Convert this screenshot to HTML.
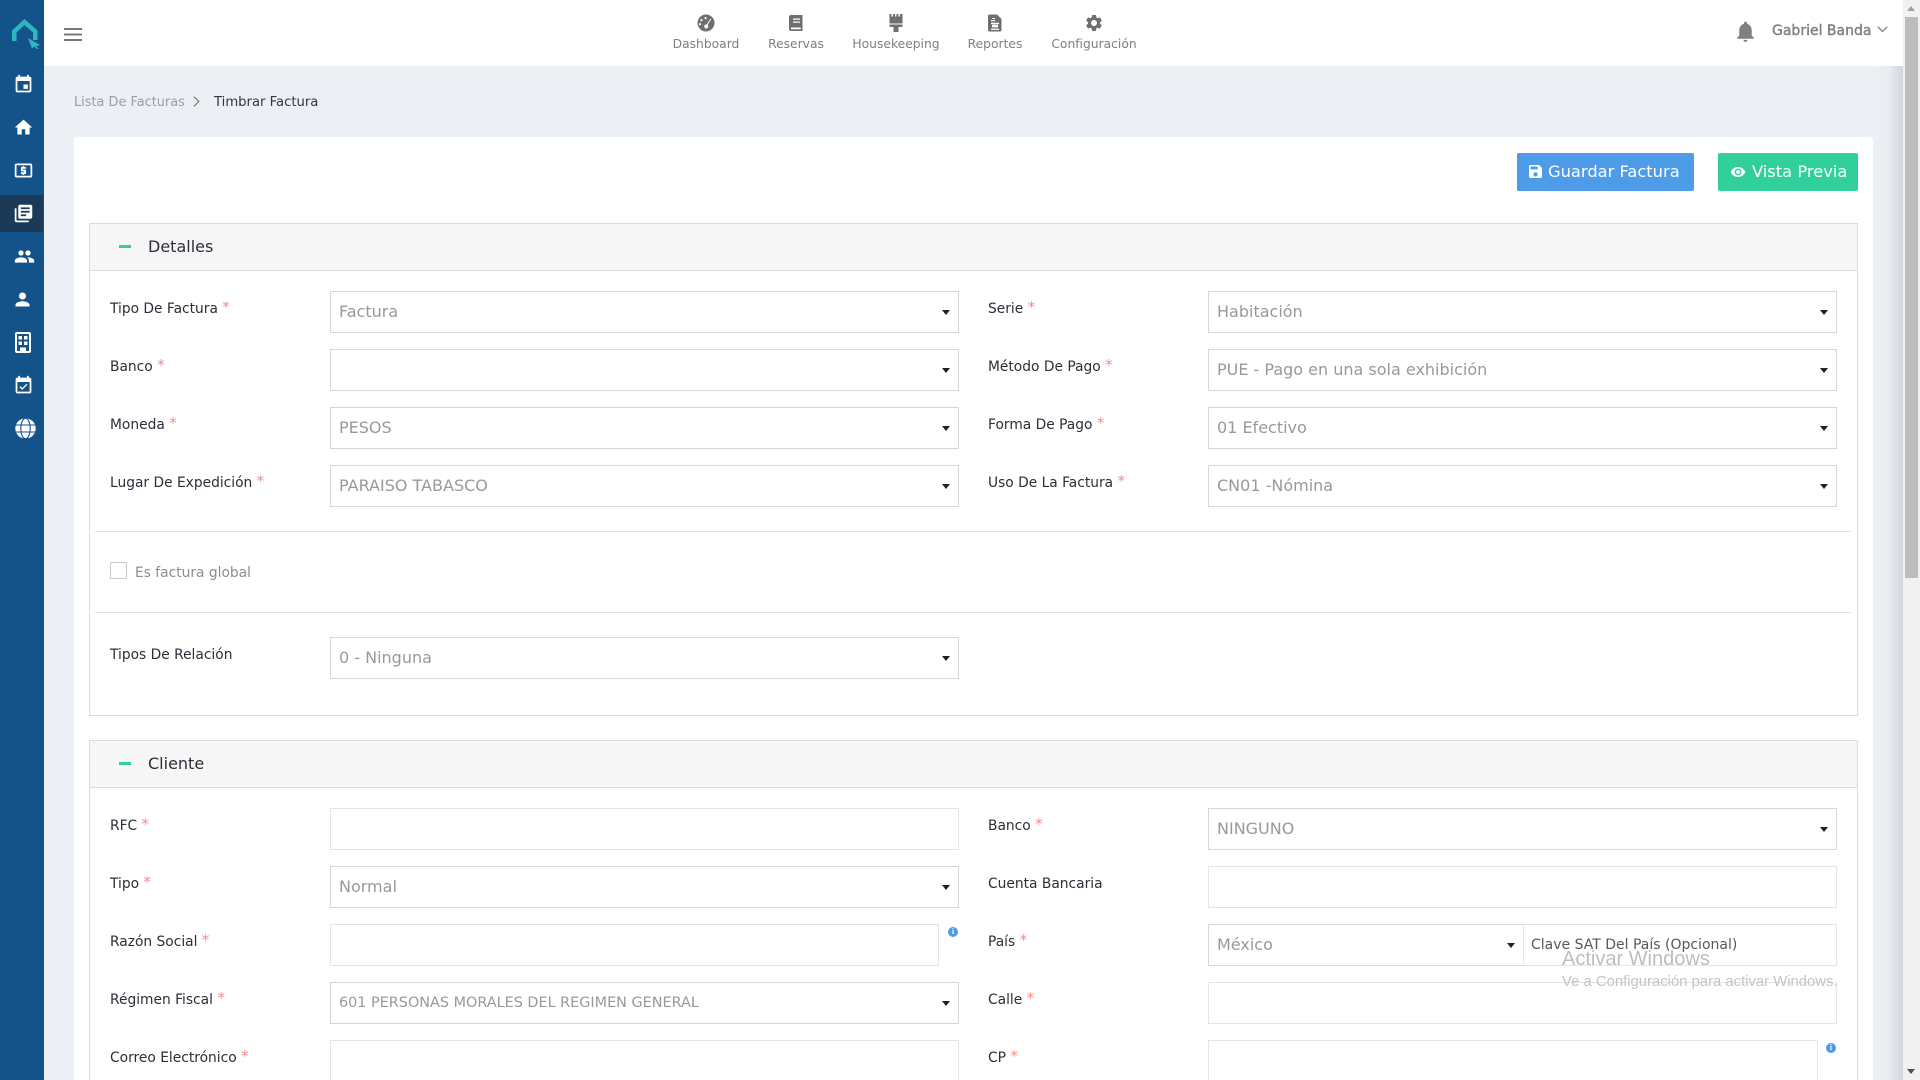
<!DOCTYPE html>
<html lang="es"><head><meta charset="utf-8"><title>Timbrar Factura</title>
<style>
*{box-sizing:border-box}
html,body{margin:0;padding:0;width:1920px;height:1080px;overflow:hidden;background:#ecf0f5;font-family:"DejaVu Sans","Liberation Sans",sans-serif}
#wrap{position:relative;width:1920px;height:1080px;overflow:hidden;background:#ecf0f5}
.a{position:absolute}
#side{left:0;top:0;width:44px;height:1080px;background:#14538a}
#active{left:0;top:195px;width:43px;height:37px;background:#1a3a57}
#side svg{position:absolute;fill:#fff}
#top{left:44px;top:0;width:1859px;height:66px;background:#fff}
.nav{position:absolute;top:35px;width:120px;text-align:center;font-size:12.3px;line-height:18px;color:#7d7f85;white-space:nowrap}
.ni{position:absolute;fill:#6f6f6f;width:20px;height:20px;top:13px}
#shadow{left:1873px;top:66px;width:30px;height:1014px;background:linear-gradient(90deg,#ecf0f5 0,#e9ecf1 50%,#d2d6dc 100%)}
#track{left:1903px;top:0;width:17px;height:1080px;background:#f1f1f1}
#thumb{left:1905px;top:17px;width:13px;height:561px;background:#bdbdbd}
#card{left:74px;top:137px;width:1799px;height:943px;background:#fff;border-radius:3px 3px 0 0}
.btn{position:absolute;top:153px;height:38px;border-radius:2px;color:#fff;font-size:16.3px;line-height:38px;white-space:nowrap}
.panel{position:absolute;left:89px;width:1769px;border:1px solid #dcdcdc;background:#fff}
.ph{position:absolute;left:89px;width:1769px;height:48px;background:#f6f6f6;border:1px solid #dcdcdc;font-size:16px;line-height:46px;color:#2b2f38;padding-left:58px}
.minus{position:absolute;left:119px;width:12px;height:3px;background:#30cf9b}
.l{position:absolute;font-size:13.8px;line-height:20px;color:#2b2f38;white-space:nowrap}
.l i{font-style:normal;color:#f28b8b;margin-left:0;font-size:15px;line-height:0;position:relative;top:-1px}
.s,.t{position:absolute;height:42px;background:#fff;border:1px solid #d3d6dc;font-size:16px;line-height:40px;color:#999;padding-left:8px;white-space:nowrap}
.t{border-color:#e3e5e9}
.s:after{content:"";position:absolute;right:8px;top:18px;border:4px solid transparent;border-top:5px solid #222;border-bottom:0}
.w1{left:330px;width:629px}
.w2{left:1208px;width:629px}
.hr{position:absolute;left:95px;width:1757px;height:1px;background:#e3e3e3}
.info{position:absolute;width:10px;height:10px;border-radius:50%;background:#4e9ce8;color:#fff;font:bold 8px/10px "Liberation Serif",serif;text-align:center}
</style></head><body>
<div id="wrap">

<div class="a" id="side">
<svg style="left:12px;top:18px;width:30px;height:31px" viewBox="0 0 30 31"><path d="M12.5 1L0 12.5V23h4.500V14.500L12.500 7l8.500 7.500V22h4.500V12.500z" fill="#2fb5c0"/><path d="M16 20l12 7-4 1.500L27 31l-2 0-3-2.500-2 2z" fill="#2fb5c0"/></svg>
<div class="a" id="active"></div>
<svg style="left:12.500px;top:74px;width:21px;height:21px" viewBox="0 0 24 24"><path d="M17 12h-5v5h5v-5zM16 1v2H8V1H6v2H5c-1.110 0-1.990.9-1.990 2L3 19c0 1.100.89 2 2 2h14c1.100 0 2-.9 2-2V5c0-1.100-.9-2-2-2h-1V1h-2zm3 18H5V8h14v11z"/></svg>
<svg style="left:13px;top:117px;width:21px;height:21px" viewBox="0 0 24 24"><path d="M10 20v-6h4v6h5v-8h3L12 3 2 12h3v8z"/></svg>
<svg style="left:13px;top:160px;width:21px;height:21px" viewBox="0 0 24 24"><path d="M11 17h2v-1h1c.55 0 1-.45 1-1v-3c0-.55-.45-1-1-1h-3v-1h4V8h-2V7h-2v1h-1c-.55 0-1 .45-1 1v3c0 .55.45 1 1 1h3v1H9v2h2v1zm9-13H4c-1.110 0-1.990.89-1.990 2L2 18c0 1.110.89 2 2 2h16c1.110 0 2-.89 2-2V6c0-1.110-.89-2-2-2zm0 14H4V6h16v12z"/></svg>
<svg style="left:13px;top:203px;width:21px;height:21px" viewBox="0 0 24 24"><path d="M4 6H2v14c0 1.100.9 2 2 2h14v-2H4V6zm16-4H8c-1.100 0-2 .9-2 2v12c0 1.100.9 2 2 2h12c1.100 0 2-.9 2-2V4c0-1.100-.9-2-2-2zm-1 9H9V9h10v2zm-4 4H9v-2h6v2zm4-8H9V5h10v2z"/></svg>
<svg style="left:14px;top:246px;width:21px;height:21px" viewBox="0 0 24 24"><path d="M16 11c1.660 0 2.990-1.340 2.990-3S17.660 5 16 5c-1.660 0-3 1.340-3 3s1.340 3 3 3zm-8 0c1.660 0 2.990-1.340 2.990-3S9.660 5 8 5C6.340 5 5 6.340 5 8s1.340 3 3 3zm0 2c-2.330 0-7 1.170-7 3.500V19h14v-2.500c0-2.330-4.670-3.500-7-3.500zm8 0c-.29 0-.62.02-.97.05 1.160.84 1.970 1.970 1.970 3.450V19h6v-2.500c0-2.330-4.670-3.500-7-3.500z"/></svg>
<svg style="left:11.500px;top:289px;width:21px;height:21px" viewBox="0 0 24 24"><path d="M12 12c2.210 0 4-1.790 4-4s-1.790-4-4-4-4 1.790-4 4 1.790 4 4 4zm0 2c-2.670 0-8 1.340-8 4v2h16v-2c0-2.660-5.330-4-8-4z"/></svg>
<svg style="left:15px;top:332px;width:16px;height:21px" viewBox="0 0 16 21"><path fill-rule="evenodd" d="M2 0h12a2 2 0 012 2v17a2 2 0 01-2 2H2a2 2 0 01-2-2V2a2 2 0 012-2zm0 2v17h3v-3.500h6V19h3V2zm1.500 2H7v3.500H3.500zm5.500 0h3.500v3.500H9zM3.500 9.500H7V13H3.500zm5.500 0h3.500V13H9z"/></svg>
<svg style="left:12.500px;top:375px;width:21px;height:21px" viewBox="0 0 24 24"><path d="M16.530 11.060L15.470 10l-4.880 4.880-2.120-2.120-1.060 1.060L10.590 17l5.940-5.940zM19 3h-1V1h-2v2H8V1H6v2H5c-1.110 0-1.990.9-1.990 2L3 19c0 1.100.89 2 2 2h14c1.100 0 2-.9 2-2V5c0-1.100-.9-2-2-2zm0 16H5V8h14v11z"/></svg>
<svg style="left:15px;top:418px;width:21px;height:21px" viewBox="0 0 21 21"><circle cx="10.500" cy="10.500" r="10.200" fill="#fff"/><g fill="none" stroke="#14538a" stroke-width="1.100"><path d="M0 7h21M0 14h21"/><ellipse cx="10.500" cy="10.500" rx="4.700" ry="10.200"/></g></svg>
</div>

<div class="a" id="top"></div>
<svg class="a" style="left:64px;top:28px;width:18px;height:13px" viewBox="0 0 18 13"><path d="M0 0h18v2H0zM0 5.500h18v2H0zM0 11h18v2H0z" fill="#777"/></svg>

<svg class="ni" style="left:696px" viewBox="0 0 20 20"><path fill-rule="evenodd" d="M10 1.500a8.500 8.500 0 110 17 8.500 8.500 0 010-17zM9.600 4a1.100 1.100 0 100 2.200A1.100 1.100 0 009.600 4zM5.500 6a1.100 1.100 0 100 2.200 1.100 1.100 0 000-2.200zM4 10a1.100 1.100 0 100 2.200A1.100 1.100 0 004 10zm10.500-4.500l-3.800 6a2 2 0 10.900.500l3.700-6z"/></svg>
<svg class="ni" style="left:786px" viewBox="0 0 20 20"><path fill-rule="evenodd" d="M5 2h11.500v16H5a2 2 0 01-2-2V4a2 2 0 012-2zm2 3.500v1.200h7V5.500zm0 3v1.200h7V8.500zM5 14.500v1.800h9.800v-1.800z"/></svg>
<svg class="ni" style="left:886px" viewBox="0 0 20 20"><path d="M3.500 1h2v2.500H7V1h2v2.500h1.500V1h2v2.500H14V1h2.500v9.500h-13zM3.500 11.500h13V13a1 1 0 01-1 1h-3v5h-5v-5h-3a1 1 0 01-1-1z"/></svg>
<svg class="ni" style="left:985px" viewBox="0 0 20 20"><path fill-rule="evenodd" d="M4.500 1.500h7.500l4.500 4.500v11a1.500 1.500 0 01-1.500 1.500H4.500A1.500 1.500 0 013 17V3a1.500 1.500 0 011.500-1.500zM6 7v1.300h4V7zm0 2.800v1.300h8V9.800zm1 1.800v2.800h6v-2.800zm-1 4v1.300h8v-1.300zM7 5v1h3V5z"/></svg>
<svg class="ni" style="left:1084px" viewBox="0 0 24 24"><path d="M19.140 12.940c.04-.3.06-.61.06-.94 0-.32-.02-.64-.07-.94l2.030-1.580c.18-.14.23-.41.12-.61l-1.920-3.320c-.12-.22-.37-.29-.59-.22l-2.390.96c-.5-.38-1.030-.7-1.620-.94l-.36-2.540c-.04-.24-.24-.41-.48-.41h-3.840c-.24 0-.43.17-.47.41l-.36 2.540c-.59.24-1.130.57-1.620.94l-2.390-.96c-.22-.08-.47 0-.59.22L2.740 8.870c-.12.21-.08.47.12.61l2.030 1.580c-.05.3-.09.63-.09.94s.02.64.07.94l-2.030 1.580c-.18.14-.23.41-.12.61l1.920 3.320c.12.22.37.29.59.22l2.390-.96c.5.38 1.030.7 1.620.94l.36 2.540c.05.24.24.41.48.41h3.840c.24 0 .44-.17.47-.41l.36-2.540c.59-.24 1.130-.56 1.620-.94l2.390.96c.22.08.47 0 .59-.22l1.920-3.320c.12-.22.07-.47-.12-.61l-2.010-1.580zM12 15.600c-1.980 0-3.600-1.620-3.600-3.600s1.620-3.600 3.600-3.600 3.600 1.620 3.600 3.600-1.620 3.600-3.600 3.600z"/></svg>
<div class="nav" style="left:646px">Dashboard</div>
<div class="nav" style="left:736px">Reservas</div>
<div class="nav" style="left:836px">Housekeeping</div>
<div class="nav" style="left:935px">Reportes</div>
<div class="nav" style="left:1034px">Configuración</div>

<svg class="a" style="left:1733px;top:19px;width:25px;height:25px;fill:#808080" viewBox="0 0 24 24"><path d="M12 22c1.100 0 2-.9 2-2h-4c0 1.100.89 2 2 2zm6-6v-5c0-3.070-1.640-5.640-4.500-6.320V4c0-.83-.67-1.500-1.500-1.500s-1.500.67-1.500 1.500v.68C7.630 5.360 6 7.920 6 11v5l-2 2v1h16v-1l-2-2z"/></svg>
<div class="a" style="left:1772px;top:21px;font-size:14px;line-height:20px;font-weight:500;color:#808080;white-space:nowrap;-webkit-text-stroke:.4px #808080">Gabriel Banda</div>
<svg class="a" style="left:1877px;top:26px;width:11px;height:7px" viewBox="0 0 11 7"><path d="M.7.7l4.800 4.800L10.300.7" fill="none" stroke="#808080" stroke-width="1.300"/></svg>

<div class="a" style="left:74px;top:93px;font-size:12.900px;line-height:20px;color:#9a9da3;white-space:nowrap">Lista De Facturas</div>
<svg class="a" style="left:193px;top:96px;width:7px;height:11px" viewBox="0 0 7 11"><path d="M1 .7l4.800 4.800L1 10.300" fill="none" stroke="#777" stroke-width="1.200"/></svg>
<div class="a" style="left:214px;top:93px;font-size:13.200px;line-height:20px;color:#33363d;white-space:nowrap">Timbrar Factura</div>

<div class="a" id="shadow"></div>
<div class="a" id="card"></div>

<div class="btn" style="left:1517px;width:177px;background:#4e9ce8;padding-left:31px">Guardar Factura</div>
<svg class="a" style="left:1529px;top:165px;width:13px;height:13px;fill:#fff" viewBox="3 3 18 18"><path d="M17 3H5c-1.110 0-2 .9-2 2v14c0 1.100.89 2 2 2h14c1.100 0 2-.9 2-2V7l-4-4zm-5 16c-1.660 0-3-1.340-3-3s1.340-3 3-3 3 1.340 3 3-1.340 3-3 3zm3-10H5V5h10v4z"/></svg>
<div class="btn" style="left:1718px;width:140px;background:#30cf9b;padding-left:34px">Vista Previa</div>
<svg class="a" style="left:1730px;top:164px;width:16px;height:16px;fill:#fff" viewBox="0 0 24 24"><path d="M12 4.500C7 4.500 2.730 7.610 1 12c1.730 4.390 6 7.500 11 7.500s9.270-3.110 11-7.500c-1.730-4.390-6-7.500-11-7.500zM12 17c-2.760 0-5-2.240-5-5s2.240-5 5-5 5 2.240 5 5-2.240 5-5 5zm0-8c-1.660 0-3 1.340-3 3s1.340 3 3 3 3-1.340 3-3-1.340-3-3-3z"/></svg>

<!-- Detalles -->
<div class="panel" style="top:223px;height:493px"></div>
<div class="ph" style="top:223px">Detalles</div>
<div class="minus" style="top:245px"></div>

<div class="l" style="left:110px;top:299px">Tipo De Factura <i>*</i></div>
<div class="s w1" style="top:291px">Factura</div>
<div class="l" style="left:988px;top:299px">Serie <i>*</i></div>
<div class="s w2" style="top:291px">Habitación</div>

<div class="l" style="left:110px;top:357px">Banco <i>*</i></div>
<div class="s w1" style="top:349px"></div>
<div class="l" style="left:988px;top:357px">Método De Pago <i>*</i></div>
<div class="s w2" style="top:349px">PUE - Pago en una sola exhibición</div>

<div class="l" style="left:110px;top:415px">Moneda <i>*</i></div>
<div class="s w1" style="top:407px">PESOS</div>
<div class="l" style="left:988px;top:415px">Forma De Pago <i>*</i></div>
<div class="s w2" style="top:407px">01 Efectivo</div>

<div class="l" style="left:110px;top:473px">Lugar De Expedición <i>*</i></div>
<div class="s w1" style="top:465px">PARAISO TABASCO</div>
<div class="l" style="left:988px;top:473px">Uso De La Factura <i>*</i></div>
<div class="s w2" style="top:465px">CN01 -Nómina</div>

<div class="hr" style="top:531px"></div>
<div class="a" style="left:110px;top:562px;width:17px;height:17px;border:1px solid #c9c9c9;border-radius:1px;background:#fff"></div>
<div class="l" style="left:135px;top:563px;color:#8a8d93">Es factura global</div>
<div class="hr" style="top:612px"></div>

<div class="l" style="left:110px;top:645px">Tipos De Relación</div>
<div class="s w1" style="top:637px">0 - Ninguna</div>

<!-- Cliente -->
<div class="panel" style="top:740px;height:340px;border-bottom:0"></div>
<div class="ph" style="top:740px">Cliente</div>
<div class="minus" style="top:762px"></div>

<div class="l" style="left:110px;top:816px">RFC <i>*</i></div>
<div class="t w1" style="top:808px"></div>
<div class="l" style="left:988px;top:816px">Banco <i>*</i></div>
<div class="s w2" style="top:808px">NINGUNO</div>

<div class="l" style="left:110px;top:874px">Tipo <i>*</i></div>
<div class="s w1" style="top:866px">Normal</div>
<div class="l" style="left:988px;top:874px">Cuenta Bancaria</div>
<div class="t w2" style="top:866px"></div>

<div class="l" style="left:110px;top:932px">Razón Social <i>*</i></div>
<div class="t" style="left:330px;top:924px;width:609px"></div>
<div class="info" style="left:948px;top:927px">i</div>
<div class="l" style="left:988px;top:932px">País <i>*</i></div>
<div class="s" style="left:1208px;top:924px;width:316px">México</div>
<div class="t" style="left:1523px;top:924px;width:314px;color:#55585f;font-size:14px;padding-left:7px">Clave SAT Del País (Opcional)</div>

<div class="l" style="left:110px;top:990px">Régimen Fiscal <i>*</i></div>
<div class="s w1" style="top:982px;font-size:14.400px">601 PERSONAS MORALES DEL REGIMEN GENERAL</div>
<div class="l" style="left:988px;top:990px">Calle <i>*</i></div>
<div class="t w2" style="top:982px"></div>

<div class="l" style="left:110px;top:1048px">Correo Electrónico <i>*</i></div>
<div class="t w1" style="top:1040px;height:50px"></div>
<div class="l" style="left:988px;top:1048px">CP <i>*</i></div>
<div class="t" style="left:1208px;top:1040px;width:610px;height:50px"></div>
<div class="info" style="left:1826px;top:1043px">i</div>

<div class="a" style="left:1562px;top:947px;font:20px/24px 'Liberation Sans',sans-serif;color:#bdbdbd;white-space:nowrap">Activar Windows</div>
<div class="a" style="left:1562px;top:973px;font:14.850px/18px 'Liberation Sans',sans-serif;color:#c4c4c4;white-space:nowrap">Ve a Configuración para activar Windows.</div>

<div class="a" id="track"></div>
<div class="a" id="thumb"></div>
<div class="a" style="left:1907px;top:6px;border:4.500px solid transparent;border-bottom:5px solid #a0a0a0;border-top:0"></div>
<div class="a" style="left:1907px;top:1069px;border:4.500px solid transparent;border-top:5px solid #505050;border-bottom:0"></div>
</div>
</body></html>
